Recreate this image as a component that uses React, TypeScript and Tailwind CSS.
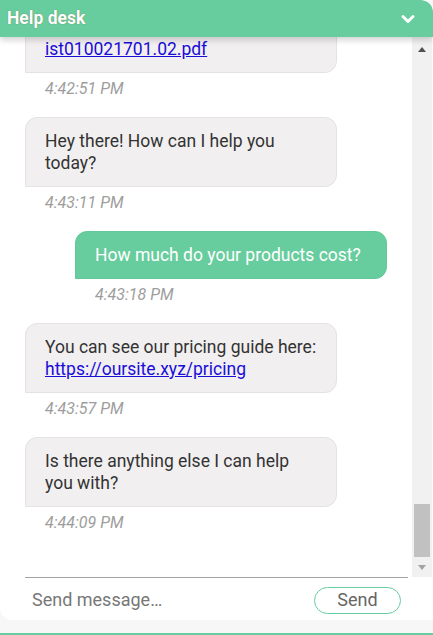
import React from 'react';
import { ChevronDown } from 'lucide-react';

type Message = {
  id: number;
  from: 'bot' | 'user';
  time: string;
  text?: string;
  link?: string;
  linkLines?: string[];
};

const messages: Message[] = [
  { id: 1, from: 'user', text: 'Can I get the latest price list?', time: '4:42:40 PM' },
  {
    id: 2,
    from: 'bot',
    text: 'Sure, you can download it here:',
    linkLines: ['https://oursite.xyz/files/pricel', 'ist010021701.02.pdf'],
    time: '4:42:51 PM'
  },
  { id: 3, from: 'bot', text: 'Hey there! How can I help you today?', time: '4:43:11 PM' },
  { id: 4, from: 'user', text: 'How much do your products cost?', time: '4:43:18 PM' },
  {
    id: 5,
    from: 'bot',
    text: 'You can see our pricing guide here:',
    link: 'https://oursite.xyz/pricing',
    time: '4:43:57 PM'
  },
  { id: 6, from: 'bot', text: 'Is there anything else I can help you with?', time: '4:44:09 PM' }
];

const ChatBubble: React.FC<{ message: Message }> = ({ message }) => {
  const isUser = message.from === 'user';
  return (
    <div className={`shrink-0 w-[312px] mb-[18px] ${isUser ? 'self-end' : 'self-start'}`}>
      <div
        className={`px-[19px] py-[12px] rounded-[12px] rounded-bl-none border text-[17.5px] leading-[22px] ${
          isUser
            ? 'bg-[#68cd9e] border-[#62c898] text-white'
            : 'bg-[#f1eff0] border-[#e4e2e3] text-[#333333]'
        }`}
      >
        {message.text}
        {message.link && (
          <>
            <br />
            <a href="#" className="text-[#1a0dd8] underline">
              {message.link}
            </a>
          </>
        )}
        {message.linkLines && (
          <>
            <br />
            <a href="#" className="text-[#1a0dd8] underline">
              {message.linkLines[0]}
              <br />
              {message.linkLines[1]}
            </a>
          </>
        )}
      </div>
      <p className="mt-[6px] pl-[20px] text-[16px] leading-[20px] italic text-[#9d9d9d]">
        {message.time}
      </p>
    </div>
  );
};

const App: React.FC = () => {
  return (
    <div className="w-[433px] h-[635px] flex flex-col bg-[#f7f7f7] font-['Roboto',sans-serif] overflow-hidden">
      <div className="flex-1 min-h-0 flex flex-col bg-white rounded-bl-[12px] rounded-tr-[12px] overflow-hidden">
        {/* header */}
        <div className="relative z-10 h-[37px] shrink-0 flex items-center justify-between pl-[7px] pr-[15px] bg-[#68cd9e] rounded-tr-[12px] shadow-[0_3px_6px_rgba(0,0,0,0.18)]">
          <h1 className="text-[17.5px] font-bold text-white [text-shadow:0_0_1px_rgba(90,80,20,0.7)]">
            Help desk
          </h1>
          <ChevronDown className="w-[20px] h-[20px] text-white" strokeWidth={3.5} />
        </div>

        {/* messages + scrollbar */}
        <div className="flex-1 min-h-0 flex pr-px">
          <div className="flex-1 min-w-0 overflow-hidden flex flex-col justify-end px-[25px] pb-[26px]">
            {messages.map((m) => (
              <ChatBubble key={m.id} message={m} />
            ))}
          </div>
          <div className="w-[20px] shrink-0 flex flex-col bg-[#f1f1f1]">
            <div className="h-[17px] flex items-end justify-center pb-[2px]">
              <svg width="8" height="5" viewBox="0 0 8 5">
                <polygon points="0,5 8,5 4,0" fill="#505050" />
              </svg>
            </div>
            <div className="flex-1" />
            <div className="h-[53px] mx-[2px] bg-[#c1c1c1]" />
            <div className="h-[20px] flex items-center justify-center">
              <svg width="8" height="5" viewBox="0 0 8 5">
                <polygon points="0,0 8,0 4,5" fill="#a3a3a3" />
              </svg>
            </div>
          </div>
        </div>

        {/* input */}
        <div className="h-[43px] shrink-0 ml-[25px] mr-[25px] border-t border-[#a3a3a3] flex items-center justify-between pl-[7px] pr-[7px]">
          <span className="text-[18px] text-[#777777]">Send message…</span>
          <button className="w-[87px] h-[27px] mt-[2px] rounded-full border border-[#68cd9e] text-[18px] leading-none text-[#666666]">
            Send
          </button>
        </div>
      </div>
      <div className="h-[13px] shrink-0" />
      <div className="h-[2px] shrink-0 bg-[#68cd9e]" />
    </div>
  );
};

export default App;
